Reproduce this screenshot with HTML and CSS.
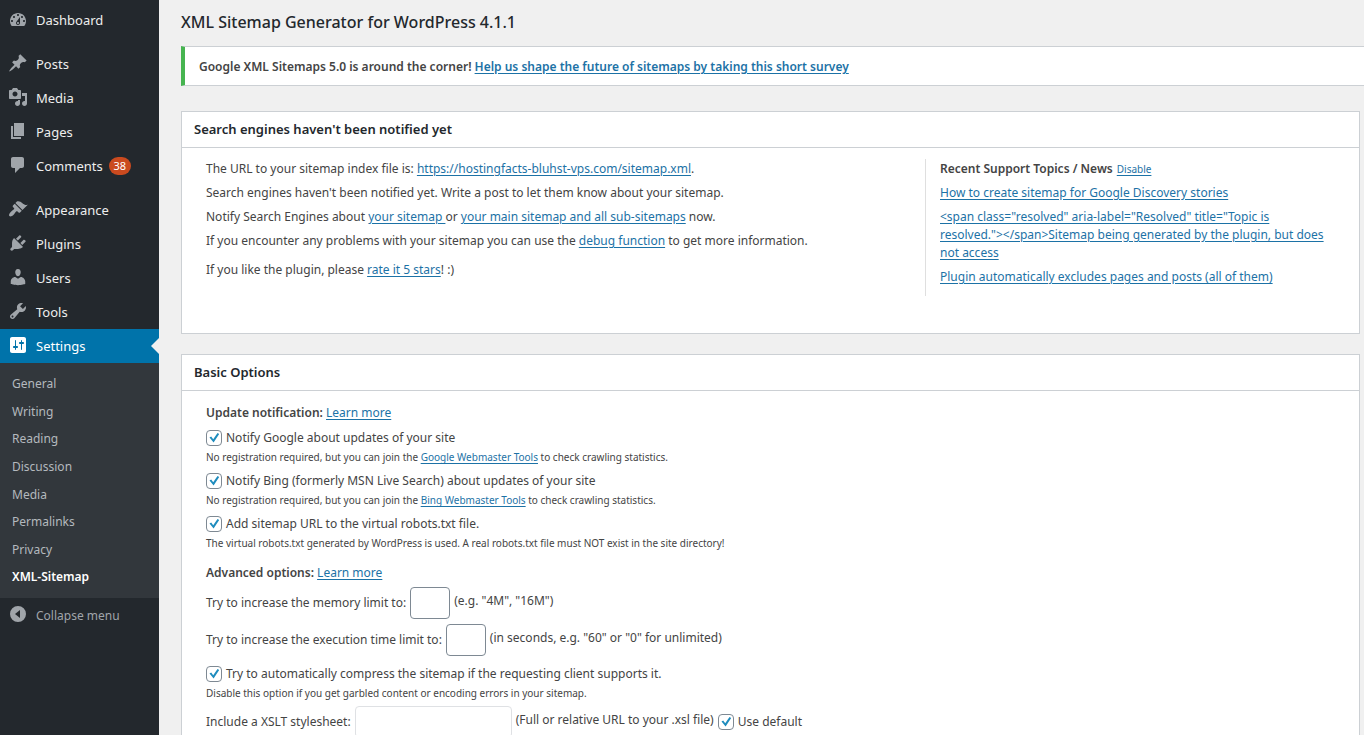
FILE: index.html
```html
<!DOCTYPE html>
<html lang="en">
<head>
<meta charset="utf-8">
<title>XML Sitemap Generator for WordPress</title>
<link rel="stylesheet" href="styles.css">
</head>
<body>
<div class="shell">
  <nav class="sidebar" aria-label="Main menu">
    <ul class="menu">
      <li><a href="#"><svg class="icon" viewBox="0 0 20 20"><path fill-rule="evenodd" d="M3.76 17h12.48c1.1-1.37 1.76-3.11 1.76-5 0-4.42-3.58-8-8-8s-8 3.58-8 8c0 1.89.66 3.63 1.76 5zM10 5c.55 0 1 .45 1 1s-.45 1-1 1-1-.45-1-1 .45-1 1-1zM6 7c.55 0 1 .45 1 1s-.45 1-1 1-1-.45-1-1 .45-1 1-1zm8 0c.55 0 1 .45 1 1s-.45 1-1 1-1-.45-1-1 .45-1 1-1zm-5.37 5.55L12 8v6c0 1.1-.9 2-2 2s-2-.9-2-2c0-.57.24-1.08.63-1.45zM4 11c.55 0 1 .45 1 1s-.45 1-1 1-1-.45-1-1 .45-1 1-1zm12 0c.55 0 1 .45 1 1s-.45 1-1 1-1-.45-1-1 .45-1 1-1zm-5 3c0-.55-.45-1-1-1s-1 .45-1 1 .45 1 1 1 1-.45 1-1z"/></svg>Dashboard</a></li>
      <li class="group"><a href="#"><svg class="icon" viewBox="0 0 20 20"><path d="M10.44 3.02l1.82-1.82 6.36 6.35-1.83 1.82c-1.05-.68-2.48-.57-3.41.36l-.75.75c-.92.93-1.04 2.35-.35 3.41l-1.83 1.82-2.41-2.41-2.8 2.79c-.42.42-3.38 2.71-3.8 2.29s1.86-3.39 2.28-3.81l2.79-2.79L4.1 9.36l1.83-1.82c1.05.69 2.48.57 3.4-.36l.75-.75c.93-.92 1.05-2.35.36-3.41z"/></svg>Posts</a></li>
      <li><a href="#"><svg class="icon" viewBox="0 0 20 20"><path fill-rule="evenodd" d="M13 11V4c0-.55-.45-1-1-1h-1.67L9 1H5L3.67 3H2c-.55 0-1 .45-1 1v7c0 .55.45 1 1 1h10c.55 0 1-.45 1-1zM7 4.5c1.38 0 2.5 1.12 2.5 2.5S8.38 9.5 7 9.5 4.5 8.38 4.5 7 5.62 4.5 7 4.5zM14 6h5v10.5c0 1.38-1.12 2.5-2.5 2.5S14 17.88 14 16.5s1.12-2.5 2.5-2.5c.17 0 .34.02.5.05V9h-3V6zm-4 8.05V13h2v3.5c0 1.38-1.12 2.5-2.5 2.5S7 17.88 7 16.5 8.12 14 9.5 14c.17 0 .34.02.5.05z"/></svg>Media</a></li>
      <li><a href="#"><svg class="icon" viewBox="0 0 20 20"><path d="M6 15V2h10v13H6zm-1 1h8v2H3V5h2v11z"/></svg>Pages</a></li>
      <li><a href="#"><svg class="icon" viewBox="0 0 20 20"><path d="M5 2h9c1.1 0 2 .9 2 2v7c0 1.1-.9 2-2 2h-2l-5 5v-5H5c-1.1 0-2-.9-2-2V4c0-1.1.9-2 2-2z"/></svg>Comments<span class="count">38</span></a></li>
      <li class="group"><a href="#"><svg class="icon" viewBox="0 0 20 20"><path d="M14.48 11.06L7.41 3.99l1.5-1.5c.5-.56 2.3-.47 3.51.32 1.21.8 1.43 1.28 2.91 2.1 1.18.64 2.45 1.26 4.45.85zm-.71.71L6.7 4.7 4.93 6.47c-.39.39-.39 1.02 0 1.41l1.06 1.06c.39.39.39 1.03 0 1.42-.6.6-1.43 1.11-2.21 1.69-.35.26-.7.53-1.01.84C1.43 14.23.4 16.08 1.4 17.07c.99 1 2.84-.03 4.18-1.36.31-.31.58-.66.85-1.02.57-.78 1.08-1.61 1.69-2.21.39-.39 1.02-.39 1.41 0l1.06 1.06c.39.39 1.02.39 1.41 0z"/></svg>Appearance</a></li>
      <li><a href="#"><svg class="icon" viewBox="0 0 20 20"><path d="M13.11 4.36L9.87 7.6 8 5.73l3.24-3.24c.35-.34 1.05-.2 1.56.32.52.51.66 1.21.31 1.55zm-8 1.77l.91-1.12 9.01 9.01-1.19.84c-.71.71-2.63 1.16-3.82 1.16H6.14L4.9 17.26c-.59.59-1.54.59-2.12 0-.59-.58-.59-1.53 0-2.12l1.24-1.24v-3.88c0-1.13.4-3.19 1.09-3.89zm7.26 3.97l3.24-3.24c.34-.35 1.04-.21 1.55.31.52.51.66 1.21.31 1.55l-3.24 3.25z"/></svg>Plugins</a></li>
      <li><a href="#"><svg class="icon" viewBox="0 0 20 20"><path d="M10 9.25c-2.27 0-2.73-3.44-2.73-3.44C7 4.02 7.82 2 9.97 2c2.16 0 2.98 2.02 2.71 3.81 0 0-.41 3.44-2.68 3.44zm0 2.57L12.72 10c2.39 0 4.52 2.33 4.52 4.53v2.49s-3.65 1.13-7.24 1.13c-3.65 0-7.24-1.13-7.24-1.13v-2.49c0-2.25 1.94-4.48 4.47-4.48z"/></svg>Users</a></li>
      <li><a href="#"><svg class="icon" viewBox="0 0 20 20"><path fill-rule="evenodd" d="M16.68 9.77c-1.34 1.34-3.3 1.67-4.95.99l-5.41 6.52c-.99.99-2.59.99-3.58 0s-.99-2.59 0-3.57l6.52-5.42c-.68-1.65-.35-3.61.99-4.95 1.28-1.28 3.12-1.62 4.72-1.06l-2.89 2.89 2.82 2.82 2.86-2.87c.53 1.58.18 3.39-1.08 4.65zM3.81 16.21c.4.39 1.04.39 1.43 0 .4-.4.4-1.04 0-1.43-.39-.4-1.03-.4-1.43 0-.39.39-.39 1.03 0 1.43z"/></svg>Tools</a></li>
      <li class="current"><a href="#"><svg class="icon" viewBox="0 0 20 20"><path fill-rule="evenodd" d="M18 16V4c0-1.1-.9-2-2-2H4c-1.1 0-2 .9-2 2v12c0 1.1.9 2 2 2h12c1.1 0 2-.9 2-2zM8 11h1c.55 0 1 .45 1 1s-.45 1-1 1H8v1.5c0 .28-.22.5-.5.5s-.5-.22-.5-.5V13H6c-.55 0-1-.45-1-1s.45-1 1-1h1V5.5c0-.28.22-.5.5-.5s.5.22.5.5V11zm5-2h-1c-.55 0-1-.45-1-1s.45-1 1-1h1V5.5c0-.28.22-.5.5-.5s.5.22.5.5V7h1c.55 0 1 .45 1 1s-.45 1-1 1h-1v5.5c0 .28-.22.5-.5.5s-.5-.22-.5-.5V9z"/></svg>Settings</a></li>
    </ul>
    <ul class="submenu">
      <li><a href="#">General</a></li>
      <li><a href="#">Writing</a></li>
      <li><a href="#">Reading</a></li>
      <li><a href="#">Discussion</a></li>
      <li><a href="#">Media</a></li>
      <li><a href="#">Permalinks</a></li>
      <li><a href="#">Privacy</a></li>
      <li><a class="active" href="#">XML-Sitemap</a></li>
    </ul>
    <button class="collapse" type="button"><svg class="icon" viewBox="0 0 20 20"><path fill-rule="evenodd" d="M10 2a8 8 0 1 1 0 16a8 8 0 0 1 0-16zM12 6l-5 4 5 4z"/></svg>Collapse menu</button>
  </nav>

  <main class="content">
    <h1>XML Sitemap Generator for WordPress 4.1.1</h1>
    <div class="notice"><strong>Google XML Sitemaps 5.0 is around the corner! <a href="#">Help us shape the future of sitemaps by taking this short survey</a></strong></div>

    <section class="panel">
      <h2>Search engines haven't been notified yet</h2>
      <div class="status">
        <div class="status-main">
          <ul class="lines">
            <li>The URL to your sitemap index file is: <a href="#">https://hostingfacts-bluhst-vps.com/sitemap.xml</a>.</li>
            <li>Search engines haven't been notified yet. Write a post to let them know about your sitemap.</li>
            <li>Notify Search Engines about <a href="#">your sitemap </a>or <a href="#">your main sitemap and all sub-sitemaps</a> now.</li>
            <li>If you encounter any problems with your sitemap you can use the <a href="#">debug function</a> to get more information.</li>
          </ul>
          <p class="rate">If you like the plugin, please <a href="#">rate it 5 stars</a>! :)</p>
        </div>
        <aside class="news">
          <p class="news-title"><strong>Recent Support Topics / News</strong> <a class="small" href="#">Disable</a></p>
          <ul class="lines">
            <li><a href="#">How to create sitemap for Google Discovery stories</a></li>
            <li><a href="#">&lt;span class="resolved" aria-label="Resolved" title="Topic is resolved."&gt;&lt;/span&gt;Sitemap being generated by the plugin, but does not access</a></li>
            <li><a href="#">Plugin automatically excludes pages and posts (all of them)</a></li>
          </ul>
        </aside>
      </div>
    </section>

    <section class="panel">
      <h2>Basic Options</h2>
      <form class="options">
        <p class="heading"><b>Update notification:</b> <a href="#">Learn more</a></p>
        <div class="option">
          <label class="check"><input type="checkbox" checked>Notify Google about updates of your site</label>
          <p class="small">No registration required, but you can join the <a href="#">Google Webmaster Tools</a> to check crawling statistics.</p>
        </div>
        <div class="option">
          <label class="check"><input type="checkbox" checked>Notify Bing (formerly MSN Live Search) about updates of your site</label>
          <p class="small">No registration required, but you can join the <a href="#">Bing Webmaster Tools</a> to check crawling statistics.</p>
        </div>
        <div class="option">
          <label class="check"><input type="checkbox" checked>Add sitemap URL to the virtual robots.txt file.</label>
          <p class="small">The virtual robots.txt generated by WordPress is used. A real robots.txt file must NOT exist in the site directory!</p>
        </div>
        <p class="heading advanced"><b>Advanced options:</b> <a href="#">Learn more</a></p>
        <div class="field"><label for="memory">Try to increase the memory limit to:</label><input id="memory" class="short" type="text"><span class="hint">(e.g. "4M", "16M")</span></div>
        <div class="field"><label for="time">Try to increase the execution time limit to:</label><input id="time" class="short" type="text"><span class="hint">(in seconds, e.g. "60" or "0" for unlimited)</span></div>
        <div class="option compress">
          <label class="check"><input type="checkbox" checked>Try to automatically compress the sitemap if the requesting client supports it.</label>
          <p class="small">Disable this option if you get garbled content or encoding errors in your sitemap.</p>
        </div>
        <div class="field"><label for="style">Include a XSLT stylesheet:</label><input id="style" class="long" type="text" disabled><span class="hint">(Full or relative URL to your .xsl file)</span><label class="check"><input type="checkbox" checked>Use default</label></div>
      </form>
    </section>
  </main>
</div>
</body>
</html>
```
FILE: styles.css
```css
* { box-sizing: border-box; }

body {
  margin: 0;
  background: #f0f0f0;
  color: #444;
  font: 12px/18px "Noto Sans", "Open Sans", sans-serif;
}

h1, h2, p, ul { margin: 0; padding: 0; }
ul { list-style: none; }
a { color: #1c72a6; text-underline-offset: 2px; }
strong, b { font-weight: 600; }

.shell {
  display: grid;
  grid-template-columns: 159px minmax(0, 1fr);
  height: 100vh;
  overflow: hidden;
}

/* Sidebar */
.sidebar { background: #23282d; }
.menu { padding-top: 3px; }
.menu .group { margin-top: 10px; }

.menu a, .collapse {
  display: flex;
  align-items: center;
  gap: 8px;
  width: 100%;
  height: 34px;
  padding: 0 8px;
  color: #eee;
  font-size: 13px;
  text-decoration: none;
}

.icon {
  flex: none;
  width: 20px;
  height: 20px;
  margin-bottom: 2px;
  fill: #a0a5aa;
}

.count {
  min-width: 22px;
  margin-left: -2px;
  border-radius: 9px;
  background: #ca4a1f;
  color: #fff;
  font-size: 11px;
  line-height: 18px;
  text-align: center;
}

.menu .current { position: relative; background: #0073aa; }
.menu .current a { color: #fff; }
.menu .current .icon { fill: #fff; }
.menu .current::after {
  content: "";
  position: absolute;
  top: 9px;
  right: 0;
  border: 8px solid transparent;
  border-left: 0;
  border-right-color: #f0f0f0;
}

.submenu {
  display: grid;
  grid-template-rows: repeat(8, 1fr);
  height: 235px;
  padding: 7px 12px;
  background: #32373c;
}

.submenu a {
  color: #b4b9be;
  line-height: 27px;
  text-decoration: none;
}
.submenu .active { color: #fff; font-weight: 600; }

.collapse {
  border: 0;
  background: none;
  color: #a0a5aa;
  font-family: inherit;
  font-size: 12px;
}

/* Page content */
.content { padding-left: 22px; }

h1 {
  padding: 10px 0 12px;
  color: #23282d;
  font-size: 16px;
  font-weight: 500;
  line-height: 24px;
}

.notice {
  padding: 11px 14px 9px;
  border: 1px solid #ccd0d4;
  border-right: 0;
  border-left: 4px solid #46b450;
  background: #fff;
}

.panel {
  margin: 25px 4px 0 0;
  border: 1px solid #ccd0d4;
  background: #fff;
}
.panel + .panel { margin-top: 20px; }

h2 {
  padding: 8px 12px 9px;
  border-bottom: 1px solid #ccd0d4;
  color: #23282d;
  font-size: 13px;
  font-weight: 600;
  line-height: 18px;
}

.status {
  display: flex;
  justify-content: space-between;
  padding: 11px 12px 37px;
}
.status-main { padding: 1px 12px; }
.lines { display: grid; gap: 6px; }
.rate { margin-top: 11px; }

.news {
  width: 422px;
  min-height: 137px;
  padding: 1px 12px 0 14px;
  border-left: 1px solid #dfdfdf;
}
.news-title {
  display: flex;
  align-items: baseline;
  gap: 4px;
  height: 18px;
  margin-bottom: 6px;
}
.small { font-size: 10px; }

.options { padding: 13px 24px 20px; }
.heading { margin-bottom: 7px; }
.option { margin-bottom: 6px; }
.option .check { margin-bottom: 1px; }
.options .advanced { margin: 12px 0 5px; }
.options .compress { margin: 9px 0 4px; }

.check { display: flex; align-items: center; gap: 4px; }

input[type="checkbox"] {
  appearance: none;
  width: 16px;
  height: 16px;
  margin: 0;
  border: 1px solid #7e8993;
  border-radius: 4px;
  background: #fff url("data:image/svg+xml,%3Csvg xmlns='http://www.w3.org/2000/svg' viewBox='0 0 14 14'%3E%3Cpath d='M2.500 6.500l1.700-1 2 2.700 4.300-6.200 1.700 1-5.600 8.500z' fill='%231e8cbe'/%3E%3C/svg%3E") center / 14px no-repeat;
}

.field { display: flex; align-items: center; gap: 4px; margin-bottom: 5px; }
.hint { padding-bottom: 4px; }

input[type="text"] {
  height: 32px;
  padding: 0 8px;
  border: 1px solid #7e8993;
  border-radius: 4px;
  background: #fff;
  font: inherit;
}
.short { width: 40px; }
.long { width: 157px; }
input[type="text"]:disabled { border-color: #dfe1e4; }
```
